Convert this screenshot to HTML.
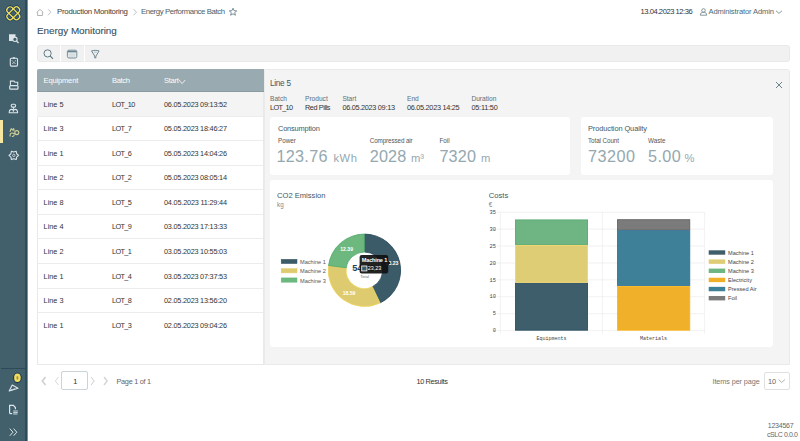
<!DOCTYPE html><html><head><meta charset="utf-8"><style>
*{margin:0;padding:0;box-sizing:border-box}
html,body{width:800px;height:441px;overflow:hidden;background:#fff;font-family:"Liberation Sans",sans-serif}
.t{position:absolute;white-space:nowrap;line-height:1}
.b{position:absolute}
svg{position:absolute;overflow:visible}
</style></head><body>
<div class="b" style="left:0;top:0;width:25.3px;height:441px;background:#425f6c"></div><div class="b" style="left:25.3px;top:0;width:1.5px;height:441px;background:#2c4c5c"></div><div class="b" style="left:26.8px;top:0;width:0.5px;height:441px;background:#7890a0"></div><div class="b" style="left:0;top:120px;width:3.3px;height:23px;background:#f7e6a0"></div><div class="b" style="left:1px;top:368px;width:24px;height:1px;background:#2c4a58"></div><svg style="left:0;top:0" width="27" height="27" viewBox="0 0 27 27">
<g transform="translate(13.3,13.3)">
<rect x="-7.6" y="-3.1" width="15.2" height="6.2" rx="2.6" transform="rotate(45)" fill="none" stroke="#1d3a5a" stroke-width="2.6"/>
<rect x="-7.6" y="-3.1" width="15.2" height="6.2" rx="2.6" transform="rotate(-45)" fill="none" stroke="#1d3a5a" stroke-width="2.6"/>
<rect x="-7.6" y="-3.1" width="15.2" height="6.2" rx="2.6" transform="rotate(45)" fill="none" stroke="#f1e05e" stroke-width="1.3"/>
<rect x="-7.6" y="-3.1" width="15.2" height="6.2" rx="2.6" transform="rotate(-45)" fill="none" stroke="#f1e05e" stroke-width="1.3"/>
</g></svg><svg style="left:0;top:27px" width="27" height="27" viewBox="0 27 27 27">
<path d="M9 34.2h6.5v2.2l-2.6 2.4v2.1H9z" fill="#dde5e8"/>
<circle cx="14.9" cy="39.3" r="2.2" fill="none" stroke="#dde5e8" stroke-width="1.1"/>
<path d="M16.5 41l2 2" stroke="#dde5e8" stroke-width="1.2"/>
</svg><svg style="left:0;top:50px" width="27" height="27" viewBox="0 50 27 27">
<rect x="10.3" y="58.3" width="7.2" height="7.8" rx="1" fill="none" stroke="#dde5e8" stroke-width="1.1"/>
<rect x="12.6" y="57.3" width="2.6" height="1.4" rx="0.5" fill="#dde5e8"/>
<path d="M12 60.5l3.8 3.8M15.8 60.5l-3.8 3.8" stroke="#dde5e8" stroke-width="1" stroke-dasharray="1.2 0.7"/>
</svg><svg style="left:0;top:72px" width="27" height="27" viewBox="0 72 27 27">
<path d="M10.4 85.3v-4.2h3.6l1 1.2h2.7v3" fill="none" stroke="#dde5e8" stroke-width="1.1"/>
<rect x="9.7" y="85.6" width="8.3" height="3.6" rx="0.9" fill="none" stroke="#dde5e8" stroke-width="1.2"/>
</svg><svg style="left:0;top:95px" width="27" height="27" viewBox="0 95 27 27">
<rect x="11.2" y="104.3" width="4.4" height="2.8" rx="1.3" fill="none" stroke="#dde5e8" stroke-width="1.1"/>
<path d="M13.4 107v2.2" stroke="#dde5e8" stroke-width="1"/>
<path d="M9.2 112.8c0-2.2 1.3-3.4 2.4-3.4s1.8 1 1.8 1.8c0-.8.7-1.8 1.8-1.8s2.4 1.2 2.4 3.4z" fill="none" stroke="#dde5e8" stroke-width="1.1" stroke-linejoin="round"/>
</svg><svg style="left:0;top:118px" width="27" height="27" viewBox="0 118 27 27">
<path d="M10 131.8l1.2-3.2 1.2 1.4 1.4-1.3.2 2.6" fill="none" stroke="#d2cf95" stroke-width="1.1" stroke-linejoin="round"/>
<circle cx="16.8" cy="132.6" r="2" fill="none" stroke="#d2cf95" stroke-width="1.1"/>
<path d="M10.2 136.5c-.6-1.8.4-3.5 2-3.5s2.5 1.2 2.8 0.2M12 136.4c1 .3 2-.6 2.3-1.8" fill="none" stroke="#d2cf95" stroke-width="1.1"/>
</svg><svg style="left:0;top:142px" width="27" height="27" viewBox="0 142 27 27">
<polygon points="18.60,155.40 16.66,157.05 16.20,159.56 13.80,158.70 11.40,159.56 10.94,157.05 9.00,155.40 10.94,153.75 11.40,151.24 13.80,152.10 16.20,151.24 16.66,153.75" fill="none" stroke="#dde5e8" stroke-width="1.1" stroke-linejoin="round"/>
<circle cx="13.8" cy="155.4" r="1.2" fill="none" stroke="#dde5e8" stroke-width="0.8"/>
</svg><svg style="left:0;top:364px" width="27" height="30" viewBox="0 364 27 30">
<path d="M9.2 391l3-6 5.8 3.3z" fill="none" stroke="#dde5e8" stroke-width="1.1" stroke-linejoin="round"/>
<path d="M11 389.8h2M13.5 389h1.5" stroke="#dde5e8" stroke-width="0.9"/>
<ellipse cx="17.4" cy="377.8" rx="4.4" ry="5.4" fill="#1e3a55"/>
<ellipse cx="17.4" cy="377.8" rx="3.3" ry="4.3" fill="#f1dc5c"/>
<ellipse cx="17.4" cy="377.8" rx="1" ry="1.9" fill="#9a9255"/>
</svg><svg style="left:0;top:395px" width="27" height="27" viewBox="0 395 27 27">
<path d="M9.6 413.6v-8.2h3.8l2 2.2v1.6" fill="none" stroke="#dde5e8" stroke-width="1.2"/>
<path d="M9.6 413.6h2.6" stroke="#dde5e8" stroke-width="1.2"/>
<path d="M13.2 411h4.6M13.2 412.6h4.6M13.2 414h4.2" stroke="#dde5e8" stroke-width="0.9"/>
</svg><svg style="left:0;top:420px" width="27" height="21" viewBox="0 420 27 21">
<path d="M9.8 428.6l3.2 3.6-3.2 3.6M13.6 428.6l3.2 3.6-3.2 3.6" fill="none" stroke="#dde5e8" stroke-width="1"/>
</svg><svg style="left:0;top:0" width="260" height="20" viewBox="0 0 260 20">
<path d="M37.6 12.3v3.2h4.8v-3.2M36.6 12.6l3.4-3.2 3.4 3.2" fill="none" stroke="#a0a0a0" stroke-width="0.8" stroke-linejoin="round"/>
<path d="M48 9.2l3 3-3 3" fill="none" stroke="#b0b0b0" stroke-width="0.8"/>
<path d="M133.5 9.2l3 3-3 3" fill="none" stroke="#b0b0b0" stroke-width="0.8"/>
<path d="M233 8.2l1.1 2.5 2.6.2-2 1.7.7 2.6-2.4-1.4-2.4 1.4.7-2.6-2-1.7 2.6-.2z" fill="none" stroke="#5a7480" stroke-width="0.8" stroke-linejoin="round"/>
</svg><div class="t" style="left:57.00px;top:8.00px;font-size:7.8px;color:#3a3a3a;letter-spacing:-0.245px;">Production Monitoring</div>
<div class="t" style="left:141.00px;top:8.00px;font-size:7.8px;color:#4a5f68;letter-spacing:-0.419px;">Energy Performance Batch</div>
<div class="t" style="left:640.50px;top:8.00px;font-size:7.6px;color:#333;letter-spacing:-0.458px;">13.04.2023 12:36</div>
<svg style="left:690px;top:0" width="110" height="20" viewBox="690 0 110 20">
<circle cx="703.5" cy="10.5" r="1.8" fill="none" stroke="#6a7f88" stroke-width="0.8"/>
<path d="M700.3 15.2c0-2 1.4-3 3.2-3s3.2 1 3.2 3z" fill="none" stroke="#6a7f88" stroke-width="0.8"/>
<path d="M776 10.8l3 2.6 3-2.6" fill="none" stroke="#6a7f88" stroke-width="0.8"/>
</svg><div class="t" style="left:708.50px;top:8.00px;font-size:7.6px;color:#4d6a76;letter-spacing:-0.140px;">Administrator Admin</div>
<div class="t" style="left:37.00px;top:26.00px;font-size:9.9px;color:#334f5d;letter-spacing:-0.021px;-webkit-text-stroke:0.1px #334f5d;">Energy Monitoring</div>
<div class="b" style="left:37px;top:45px;width:753px;height:17px;background:#f1f1f1;border:0.6px solid #e9e9e9;border-radius:3px"></div><div class="b" style="left:60px;top:45px;width:1px;height:17px;background:#fff"></div><div class="b" style="left:83.5px;top:45px;width:1px;height:17px;background:#fff"></div><svg style="left:0;top:40px" width="120" height="25" viewBox="0 40 120 25">
<circle cx="47.6" cy="53.4" r="3.6" fill="none" stroke="#5f7b87" stroke-width="1"/>
<path d="M50.2 56l2.8 2.8" stroke="#5f7b87" stroke-width="1.1"/>
<rect x="67.4" y="50.2" width="9.4" height="7.8" rx="1.5" fill="#e4e9eb" stroke="#6a8490" stroke-width="0.9"/>
<path d="M67.6 51.6h9" stroke="#6a8490" stroke-width="1.4"/>
<path d="M69.2 54.2h5.8M69.2 56h5.8" stroke="#c3ced3" stroke-width="0.7"/>
<path d="M91.5 50.9c2.4-.7 5.2-.7 7.6 0l-3.2 5.2v1.8h-1.2v-1.8z" fill="none" stroke="#5f7b87" stroke-width="0.9" stroke-linejoin="round"/>
<path d="M93.8 52.2h3" stroke="#8aa0a8" stroke-width="0.6"/>
</svg><div class="b" style="left:37px;top:69px;width:226.5px;height:295.5px;border:1px solid #e9e9e9;border-top:none"></div><div class="b" style="left:37px;top:69px;width:226.5px;height:22.5px;background:#99abb1;border-radius:2px 0 0 0;border-bottom:1.5px solid #8a9ca3"></div><div class="t" style="left:43.60px;top:77.00px;font-size:7.6px;color:#fcfdfd;letter-spacing:-0.204px;">Equipment</div>
<div class="t" style="left:112.00px;top:77.00px;font-size:7.6px;color:#fcfdfd;letter-spacing:-0.354px;">Batch</div>
<div class="t" style="left:164.00px;top:77.00px;font-size:7.6px;color:#fcfdfd;letter-spacing:-0.309px;">Start</div>
<svg style="left:178px;top:78px" width="10" height="8" viewBox="0 0 10 8"><path d="M1 2l3.1 3.6 3.1-3.6" fill="none" stroke="#fcfdfd" stroke-width="0.8"/></svg><div class="b" style="left:37px;top:91.5px;width:226px;height:25.08px;background:#f4f4f4"></div><div class="b" style="left:38px;top:115.58px;width:224.5px;height:1px;background:#ececec"></div><div class="t" style="left:43.60px;top:101.00px;font-size:7.3px;color:#333;">Line 5</div>
<div class="t" style="left:112.00px;top:101.00px;font-size:7.3px;color:#333;letter-spacing:-0.607px;">LOT_10</div>
<div class="t" style="left:164.00px;top:101.00px;font-size:7.3px;color:#333;letter-spacing:-0.221px;">06.05.2023 09:13:52</div>
<div class="b" style="left:38px;top:140.16px;width:224.5px;height:1px;background:#ececec"></div><div class="t" style="left:43.60px;top:125.00px;font-size:7.3px;color:#333;">Line 3</div>
<div class="t" style="left:112.00px;top:125.00px;font-size:7.3px;color:#333;letter-spacing:-0.641px;">LOT_7</div>
<div class="t" style="left:164.00px;top:125.00px;font-size:7.3px;color:#333;letter-spacing:-0.221px;">05.05.2023 18:46:27</div>
<div class="b" style="left:38px;top:164.74px;width:224.5px;height:1px;background:#ececec"></div><div class="t" style="left:43.60px;top:150.00px;font-size:7.3px;color:#333;">Line 1</div>
<div class="t" style="left:112.00px;top:150.00px;font-size:7.3px;color:#333;letter-spacing:-0.641px;">LOT_6</div>
<div class="t" style="left:164.00px;top:150.00px;font-size:7.3px;color:#333;letter-spacing:-0.221px;">05.05.2023 14:04:26</div>
<div class="b" style="left:38px;top:189.32px;width:224.5px;height:1px;background:#ececec"></div><div class="t" style="left:43.60px;top:174.00px;font-size:7.3px;color:#333;">Line 2</div>
<div class="t" style="left:112.00px;top:174.00px;font-size:7.3px;color:#333;letter-spacing:-0.641px;">LOT_2</div>
<div class="t" style="left:164.00px;top:174.00px;font-size:7.3px;color:#333;letter-spacing:-0.221px;">05.05.2023 08:05:14</div>
<div class="b" style="left:38px;top:213.90px;width:224.5px;height:1px;background:#ececec"></div><div class="t" style="left:43.60px;top:199.00px;font-size:7.3px;color:#333;">Line 8</div>
<div class="t" style="left:112.00px;top:199.00px;font-size:7.3px;color:#333;letter-spacing:-0.641px;">LOT_5</div>
<div class="t" style="left:164.00px;top:199.00px;font-size:7.3px;color:#333;letter-spacing:-0.191px;">04.05.2023 11:29:44</div>
<div class="b" style="left:38px;top:238.48px;width:224.5px;height:1px;background:#ececec"></div><div class="t" style="left:43.60px;top:223.00px;font-size:7.3px;color:#333;">Line 4</div>
<div class="t" style="left:112.00px;top:223.00px;font-size:7.3px;color:#333;letter-spacing:-0.641px;">LOT_9</div>
<div class="t" style="left:164.00px;top:223.00px;font-size:7.3px;color:#333;letter-spacing:-0.221px;">03.05.2023 17:13:33</div>
<div class="b" style="left:38px;top:263.06px;width:224.5px;height:1px;background:#ececec"></div><div class="t" style="left:43.60px;top:248.00px;font-size:7.3px;color:#333;">Line 2</div>
<div class="t" style="left:112.00px;top:248.00px;font-size:7.3px;color:#333;letter-spacing:-0.641px;">LOT_1</div>
<div class="t" style="left:164.00px;top:248.00px;font-size:7.3px;color:#333;letter-spacing:-0.221px;">03.05.2023 10:55:03</div>
<div class="b" style="left:38px;top:287.64px;width:224.5px;height:1px;background:#ececec"></div><div class="t" style="left:43.60px;top:273.00px;font-size:7.3px;color:#333;">Line 1</div>
<div class="t" style="left:112.00px;top:273.00px;font-size:7.3px;color:#333;letter-spacing:-0.641px;">LOT_4</div>
<div class="t" style="left:164.00px;top:273.00px;font-size:7.3px;color:#333;letter-spacing:-0.221px;">03.05.2023 07:37:53</div>
<div class="b" style="left:38px;top:312.22px;width:224.5px;height:1px;background:#ececec"></div><div class="t" style="left:43.60px;top:297.00px;font-size:7.3px;color:#333;">Line 3</div>
<div class="t" style="left:112.00px;top:297.00px;font-size:7.3px;color:#333;letter-spacing:-0.641px;">LOT_8</div>
<div class="t" style="left:164.00px;top:297.00px;font-size:7.3px;color:#333;letter-spacing:-0.221px;">02.05.2023 13:56:20</div>
<div class="t" style="left:43.60px;top:322.00px;font-size:7.3px;color:#333;">Line 1</div>
<div class="t" style="left:112.00px;top:322.00px;font-size:7.3px;color:#333;letter-spacing:-0.641px;">LOT_3</div>
<div class="t" style="left:164.00px;top:322.00px;font-size:7.3px;color:#333;letter-spacing:-0.221px;">02.05.2023 09:04:26</div>
<svg style="left:30px;top:365px" width="90" height="30" viewBox="30 365 90 30">
<path d="M45.5 377l-3.2 4 3.2 4" fill="none" stroke="#cfcfcf" stroke-width="1.6"/>
<path d="M58.5 377l-3.2 4 3.2 4" fill="none" stroke="#d4d4d4" stroke-width="0.9"/>
<path d="M91 377l3.2 4-3.2 4" fill="none" stroke="#c8c8c8" stroke-width="0.9"/>
<path d="M104 377l3.2 4-3.2 4" fill="none" stroke="#d4d4d4" stroke-width="1.4"/>
</svg><div class="b" style="left:61.3px;top:371.3px;width:27.2px;height:18.7px;border:1px solid #c9d3d8;border-radius:2px;background:#fff"></div><div class="t" style="left:73.30px;top:378.00px;font-size:7.3px;color:#333;">1</div>
<div class="t" style="left:116.50px;top:378.00px;font-size:7.3px;color:#666;letter-spacing:-0.284px;">Page 1 of 1</div>
<div class="t" style="left:416.50px;top:378.00px;font-size:7.3px;color:#333;letter-spacing:-0.344px;">10 Results</div>
<div class="t" style="left:712.50px;top:378.00px;font-size:7.3px;color:#777;letter-spacing:-0.111px;">Items per page</div>
<div class="b" style="left:763.5px;top:372px;width:26px;height:17.5px;border:1px solid #e0e0e0;border-radius:2px;background:#fff"></div><div class="t" style="left:768.00px;top:378.00px;font-size:7.3px;color:#666;">10</div>
<svg style="left:775px;top:376px" width="12" height="10" viewBox="0 0 12 10"><path d="M3.5 3.5l3.2 3 3.2-3" fill="none" stroke="#999" stroke-width="0.8"/></svg><div class="t" style="left:767.75px;top:422.00px;font-size:7px;color:#666;letter-spacing:-0.236px;">1234567</div>
<div class="t" style="left:767.00px;top:431.00px;font-size:7px;color:#666;letter-spacing:-0.402px;">cSLC 0.0.0</div>

<div class="b" style="left:264px;top:69px;width:526px;height:295.5px;background:#f4f4f4;border:0.6px solid #eaeaea;border-radius:0 3px 0 0"></div><svg style="left:770px;top:78px" width="16" height="14" viewBox="770 78 16 14"><path d="M776 82l6 6M782 82l-6 6" stroke="#5f7580" stroke-width="0.9"/></svg><div class="t" style="left:270.00px;top:80.00px;font-size:8.2px;color:#3d5866;letter-spacing:-0.269px;">Line 5</div>
<div class="t" style="left:270.00px;top:96.00px;font-size:6.6px;color:#5a6e78;">Batch</div>
<div class="t" style="left:270.00px;top:104.00px;font-size:7.3px;color:#333;letter-spacing:-0.678px;">LOT_10</div>
<div class="t" style="left:305.00px;top:96.00px;font-size:6.6px;color:#5a6e78;">Product</div>
<div class="t" style="left:305.00px;top:104.00px;font-size:7.3px;color:#333;letter-spacing:-0.412px;">Red Pills</div>
<div class="t" style="left:342.40px;top:96.00px;font-size:6.6px;color:#5a6e78;">Start</div>
<div class="t" style="left:342.40px;top:104.00px;font-size:7.3px;color:#333;letter-spacing:-0.282px;">06.05.2023 09:13</div>
<div class="t" style="left:407.00px;top:96.00px;font-size:6.6px;color:#5a6e78;">End</div>
<div class="t" style="left:407.00px;top:104.00px;font-size:7.3px;color:#333;letter-spacing:-0.282px;">06.05.2023 14:25</div>
<div class="t" style="left:471.40px;top:96.00px;font-size:6.6px;color:#5a6e78;">Duration</div>
<div class="t" style="left:471.40px;top:104.00px;font-size:7.3px;color:#333;letter-spacing:-0.212px;">05:11:50</div>
<div class="b" style="left:270px;top:117px;width:300px;height:58px;background:#fff;border-radius:3px"></div><div class="b" style="left:580.5px;top:117px;width:192.5px;height:58px;background:#fff;border-radius:3px"></div><div class="t" style="left:278.00px;top:125.00px;font-size:7.4px;color:#3d5866;letter-spacing:-0.169px;">Consumption</div>
<div class="t" style="left:278.00px;top:138.00px;font-size:6.3px;color:#555;">Power</div>
<div class="t" style="left:276.50px;top:148.00px;font-size:16.2px;color:#94a8af;letter-spacing:0.286px;">123.76</div>
<div class="t" style="left:333.50px;top:153.00px;font-size:11.2px;color:#94a8af;letter-spacing:0.500px;">kWh</div>
<div class="t" style="left:369.80px;top:138.00px;font-size:6.3px;color:#555;letter-spacing:-0.121px;">Compressed air</div>
<div class="t" style="left:369.80px;top:148.00px;font-size:16.2px;color:#94a8af;letter-spacing:0.118px;">2028</div>
<div class="t" style="left:411.00px;top:153.00px;font-size:11.2px;color:#94a8af;">m³</div>
<div class="t" style="left:439.40px;top:138.00px;font-size:6.3px;color:#555;">Foil</div>
<div class="t" style="left:439.40px;top:148.00px;font-size:16.2px;color:#94a8af;letter-spacing:0.185px;">7320</div>
<div class="t" style="left:481.00px;top:153.00px;font-size:11.2px;color:#94a8af;">m</div>
<div class="t" style="left:588.00px;top:125.00px;font-size:7.4px;color:#3d5866;letter-spacing:-0.086px;">Production Quality</div>
<div class="t" style="left:588.00px;top:138.00px;font-size:6.3px;color:#555;letter-spacing:-0.088px;">Total Count</div>
<div class="t" style="left:648.00px;top:138.00px;font-size:6.3px;color:#555;">Waste</div>
<div class="t" style="left:588.00px;top:148.00px;font-size:16.2px;color:#94a8af;letter-spacing:0.491px;">73200</div>
<div class="t" style="left:648.00px;top:148.00px;font-size:16.2px;color:#94a8af;letter-spacing:0.397px;">5.00</div>
<div class="t" style="left:684.50px;top:153.00px;font-size:11.2px;color:#94a8af;">%</div>
<div class="b" style="left:270px;top:180px;width:503px;height:167px;background:#fff;border-radius:3px"></div><div class="t" style="left:277.00px;top:192.00px;font-size:7.6px;color:#3d5866;">CO2 Emission</div>
<div class="t" style="left:277.00px;top:202.00px;font-size:6.3px;color:#888;">kg</div>
<div class="t" style="left:488.80px;top:192.00px;font-size:7.6px;color:#3d5866;">Costs</div>
<div class="t" style="left:488.80px;top:202.00px;font-size:6.3px;color:#888;">€</div>
<svg style="left:270px;top:180px" width="503" height="167" viewBox="270 180 503 167"><path d="M364.40 234.10A36.2 36.2 0 0 1 380.12 302.91L372.35 286.79A18.3 18.3 0 0 0 364.40 252.00Z" fill="#3b5b69" stroke="#1f4459" stroke-width="0.8"/><path d="M380.12 302.91A36.2 36.2 0 0 1 328.53 265.44L346.27 267.84A18.3 18.3 0 0 0 372.35 286.79Z" fill="#dfcb6f" stroke="#ecd45c" stroke-width="0.8"/><path d="M328.53 265.44A36.2 36.2 0 0 1 364.40 234.10L364.40 252.00A18.3 18.3 0 0 0 346.27 267.84Z" fill="#6cb87f" stroke="#4fa76a" stroke-width="0.8"/><g font-family="Liberation Sans" font-weight="bold" fill="#fff" font-size="5.1"><text x="346.6" y="251.1" text-anchor="middle">12.39</text><text x="349" y="295.3" text-anchor="middle">18.59</text><text x="392" y="265.4" text-anchor="middle">23.23</text></g><text x="352.2" y="270.5" font-family="Liberation Sans" font-weight="bold" font-size="9.2" fill="#233f52">54.21</text><text x="364.6" y="277.8" text-anchor="middle" font-family="Liberation Sans" font-size="4" fill="#5a7480">Total</text><rect x="359.6" y="255.1" width="28.6" height="18.3" rx="2" fill="#111" fill-opacity="0.93"/><path d="M388 260.8l2.6 2.2-2.6 2.2z" fill="#111"/><text x="361.8" y="261.8" font-family="Liberation Sans" font-weight="bold" font-size="5.6" letter-spacing="-0.2" fill="#fff">Machine 1</text><rect x="361.7" y="266" width="5.2" height="4.9" fill="#3b5b69" stroke="#e8e8e8" stroke-width="0.9"/><text x="367.8" y="270.2" font-family="Liberation Sans" font-size="5.4" fill="#fff">23,23</text><rect x="281.2" y="259.30" width="15.8" height="4.3" fill="#3b5b69" stroke="#3b5b69" stroke-width="0.5"/><text x="300" y="263.90" font-family="Liberation Sans" font-size="5.6" fill="#555">Machine 1</text><rect x="281.2" y="268.60" width="15.8" height="4.3" fill="#dfcb6f" stroke="#dfcb6f" stroke-width="0.5"/><text x="300" y="273.20" font-family="Liberation Sans" font-size="5.6" fill="#555">Machine 2</text><rect x="281.2" y="277.90" width="15.8" height="4.3" fill="#6cb87f" stroke="#6cb87f" stroke-width="0.5"/><text x="300" y="282.50" font-family="Liberation Sans" font-size="5.6" fill="#555">Machine 3</text><path d="M497 330.60H704.6" stroke="#e8e8e8" stroke-width="0.6"/><text x="496" y="332.30" text-anchor="end" font-family="Liberation Mono" font-size="5.4" fill="#444">0</text><path d="M497 313.69H704.6" stroke="#e8e8e8" stroke-width="0.6"/><text x="496" y="315.39" text-anchor="end" font-family="Liberation Mono" font-size="5.4" fill="#444">5</text><path d="M497 296.77H704.6" stroke="#e8e8e8" stroke-width="0.6"/><text x="496" y="298.47" text-anchor="end" font-family="Liberation Mono" font-size="5.4" fill="#444">10</text><path d="M497 279.86H704.6" stroke="#e8e8e8" stroke-width="0.6"/><text x="496" y="281.56" text-anchor="end" font-family="Liberation Mono" font-size="5.4" fill="#444">15</text><path d="M497 262.94H704.6" stroke="#e8e8e8" stroke-width="0.6"/><text x="496" y="264.64" text-anchor="end" font-family="Liberation Mono" font-size="5.4" fill="#444">20</text><path d="M497 246.03H704.6" stroke="#e8e8e8" stroke-width="0.6"/><text x="496" y="247.73" text-anchor="end" font-family="Liberation Mono" font-size="5.4" fill="#444">25</text><path d="M497 229.11H704.6" stroke="#e8e8e8" stroke-width="0.6"/><text x="496" y="230.81" text-anchor="end" font-family="Liberation Mono" font-size="5.4" fill="#444">30</text><path d="M497 212.20H704.6" stroke="#e8e8e8" stroke-width="0.6"/><text x="496" y="213.90" text-anchor="end" font-family="Liberation Mono" font-size="5.4" fill="#444">35</text><path d="M500.4 212.2V333.8" stroke="#e8e8e8" stroke-width="0.6"/><path d="M602.4 212.2V333.8" stroke="#e8e8e8" stroke-width="0.6"/><path d="M704.6 212.2V333.8" stroke="#e8e8e8" stroke-width="0.6"/><rect x="515.4" y="283.10" width="72.20" height="47.10" fill="#3e5e6c" stroke="#244a5c" stroke-width="0.8"/><rect x="515.4" y="245.21" width="72.20" height="37.09" fill="#dfcd76" stroke="#f0d662" stroke-width="0.8"/><rect x="515.4" y="219.91" width="72.20" height="24.50" fill="#6fb583" stroke="#50a56b" stroke-width="0.8"/><rect x="617.4" y="286.21" width="72.40" height="43.99" fill="#f0b02a" stroke="#f8b418" stroke-width="0.8"/><rect x="617.4" y="230.60" width="72.40" height="54.81" fill="#3e8098" stroke="#2a6e9a" stroke-width="0.8"/><rect x="617.4" y="219.70" width="72.40" height="10.09" fill="#7b7b7b" stroke="#5e5e5e" stroke-width="0.8"/><text x="551.5" y="340" text-anchor="middle" font-family="Liberation Mono" font-size="5" fill="#444">Equipments</text><text x="653.5" y="340" text-anchor="middle" font-family="Liberation Mono" font-size="5" fill="#444">Materials</text><rect x="708.7" y="250.30" width="16.5" height="4.4" fill="#3e5e6c"/><text x="728" y="254.70" font-family="Liberation Sans" font-size="5.6" fill="#444">Machine 1</text><rect x="708.7" y="259.44" width="16.5" height="4.4" fill="#dfcd76"/><text x="728" y="263.84" font-family="Liberation Sans" font-size="5.6" fill="#444">Machine 2</text><rect x="708.7" y="268.58" width="16.5" height="4.4" fill="#6fb583"/><text x="728" y="272.98" font-family="Liberation Sans" font-size="5.6" fill="#444">Machine 3</text><rect x="708.7" y="277.72" width="16.5" height="4.4" fill="#f0b02a"/><text x="728" y="282.12" font-family="Liberation Sans" font-size="5.6" fill="#444">Electricity</text><rect x="708.7" y="286.86" width="16.5" height="4.4" fill="#3e8098"/><text x="728" y="291.26" font-family="Liberation Sans" font-size="5.6" fill="#444">Pressed Air</text><rect x="708.7" y="296.00" width="16.5" height="4.4" fill="#7b7b7b"/><text x="728" y="300.40" font-family="Liberation Sans" font-size="5.6" fill="#444">Foil</text></svg>
</body></html>
